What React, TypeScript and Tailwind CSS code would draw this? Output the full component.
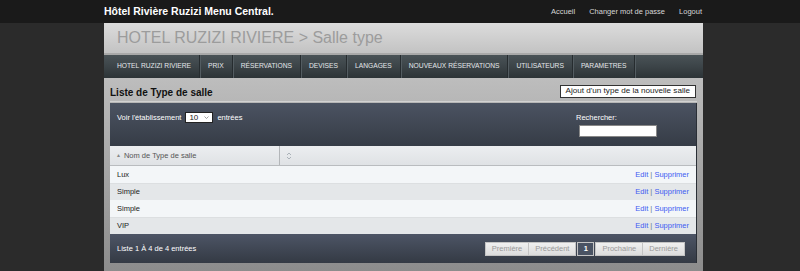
import React from 'react';

const navItems = [
  'HOTEL RUZIZI RIVIERE',
  'PRIX',
  'RÉSERVATIONS',
  'DEVISES',
  'LANGAGES',
  'NOUVEAUX RÉSERVATIONS',
  'UTILISATEURS',
  'PARAMETRES',
];

const rows = ['Lux', 'Simple', 'Simple', 'VIP'];

function SortBoth() {
  return (
    <svg width="6" height="8" viewBox="0 0 6 8" className="text-[#9aa3ab]">
      <path d="M1 3 L3 1 L5 3" fill="none" stroke="currentColor" strokeWidth="0.8" />
      <path d="M1 5 L3 7 L5 5" fill="none" stroke="currentColor" strokeWidth="0.8" />
    </svg>
  );
}

export default function App() {
  return (
    <div className="min-h-screen bg-[#2b2b2b] font-['Liberation_Sans',Arial,sans-serif]">
      {/* barre du haut */}
      <div className="h-[23px] bg-[#1a1a1a]">
        <div className="ml-[104px] w-[599px] h-full flex items-center justify-between">
          <span className="text-[10.5px] font-bold text-white">Hôtel Rivière Ruzizi Menu Central.</span>
          <div className="flex items-center gap-[14px] text-[7.5px] text-[#d6d6d6] pr-[1px]">
            <span>Accueil</span>
            <span>Changer mot de passe</span>
            <span>Logout</span>
          </div>
        </div>
      </div>

      <div className="ml-[104px] w-[599px]">
        {/* en-tête */}
        <div className="h-[32px] bg-gradient-to-b from-[#dcdcdc] to-[#c3c3c3] border-b-[2px] border-[#a9a9a9] flex items-center pl-[13px]">
          <h1 className="text-[16px] leading-none text-[#9c9c9c]">HOTEL RUZIZI RIVIERE &gt; Salle type</h1>
        </div>

        {/* menu */}
        <nav className="h-[23px] bg-gradient-to-b from-[#4a5357] via-[#3c4448] to-[#2c3336] flex items-stretch pl-[5px]">
          {navItems.map((item) => (
            <div
              key={item}
              className="px-[8px] flex items-center text-[6.7px] text-[#e4e7ea] border-r border-[#262c2f] shadow-[1px_0_0_#535c61]"
            >
              {item}
            </div>
          ))}
        </nav>

        {/* contenu */}
        <div className="bg-gradient-to-b from-[#bdbdbd] to-[#8c8c8c] px-[6px] pt-[6px] pb-[9px]">
          <div className="flex items-center justify-between h-[18px] border-b border-[#d2d2d2] mb-[1px]">
            <h2 className="text-[10px] font-bold text-[#111]">Liste de Type de salle</h2>
            <button className="h-[13px] px-[5px] bg-white border border-[#333] text-[8.1px] leading-none text-[#222] mr-[1px] mb-[2px]">
              Ajout d'un type de la nouvelle salle
            </button>
          </div>

          <div className="mt-[1px] border-r border-[#2a2f36]">
            {/* barre d'outils */}
            <div className="h-[43px] bg-gradient-to-b from-[#4b5362] to-[#363c46] flex justify-between pl-[7px] pr-[39px]">
              <div className="flex items-center gap-[4px] text-[7.5px] text-white h-[29px]">
                <span>Voir l'établissement</span>
                <div className="flex items-center justify-between w-[28px] h-[11px] bg-white border border-[#222] px-[3px] text-[#222] text-[8px]">
                  <span>10</span>
                  <svg width="5" height="3" viewBox="0 0 5 3">
                    <path d="M0.5 0.5 L2.5 2.5 L4.5 0.5" fill="none" stroke="#777" strokeWidth="0.7" />
                  </svg>
                </div>
                <span>entrées</span>
              </div>
              <div className="pt-[10px] text-[7.5px] text-white">
                <div className="leading-[9px]">Rechercher:</div>
                <div className="ml-[3px] mt-[3px] w-[78px] h-[12px] bg-white border border-[#888]" />
              </div>
            </div>

            {/* tableau */}
            <div className="flex h-[20px] bg-gradient-to-b from-[#eceef0] to-[#dfe2e5] border-b border-[#b9bcbf] text-[7.5px] text-[#555]">
              <div className="w-[170px] border-r border-[#b3b6b9] flex items-center pl-[6px] gap-[3px]">
                <span className="text-[5px] text-[#888]">▲</span>
                <span>Nom de Type de salle</span>
              </div>
              <div className="flex-1 flex items-center pl-[6px]">
                <SortBoth />
              </div>
            </div>

            {rows.map((r, i) => (
              <div
                key={i}
                className={`h-[17px] flex items-center justify-between pl-[7px] pr-[7px] text-[7.5px] ${
                  i % 2 === 0 ? 'bg-[#f3f6f8]' : 'bg-[#e4e7e9] border-t border-[#dcdfe1]'
                }`}
              >
                <span className="text-[#222]">{r}</span>
                <span className="text-[#3e5cf2]">
                  Edit <span className="text-[#6b7390]">|</span> Supprimer
                </span>
              </div>
            ))}

            {/* pied */}
            <div className="h-[29px] bg-gradient-to-b from-[#4d5566] to-[#343a44] flex items-center justify-between pl-[7px] pr-[11px]">
              <span className="text-[7.5px] text-white">Liste 1 À 4 de 4 entrées</span>
              <div className="flex items-stretch h-[14px] text-[7.5px]">
                <span className="px-[6px] flex items-center bg-gradient-to-b from-[#f0f0f0] to-[#dcdcdc] border border-[#c4c4c4] text-[#9a9a9a]">Première</span>
                <span className="px-[6px] flex items-center bg-gradient-to-b from-[#f0f0f0] to-[#dcdcdc] border border-l-0 border-[#c4c4c4] text-[#9a9a9a]">Précédent</span>
                <span className="w-[17px] flex items-center justify-center bg-[#4a5363] border border-[#c4c4c4] text-white font-bold mx-[1px]">1</span>
                <span className="px-[6px] flex items-center bg-gradient-to-b from-[#f0f0f0] to-[#dcdcdc] border border-[#c4c4c4] text-[#9a9a9a]">Prochaine</span>
                <span className="px-[6px] flex items-center bg-gradient-to-b from-[#f0f0f0] to-[#dcdcdc] border border-l-0 border-[#c4c4c4] text-[#9a9a9a]">Dernière</span>
              </div>
            </div>
          </div>
        </div>
      </div>
    </div>
  );
}
